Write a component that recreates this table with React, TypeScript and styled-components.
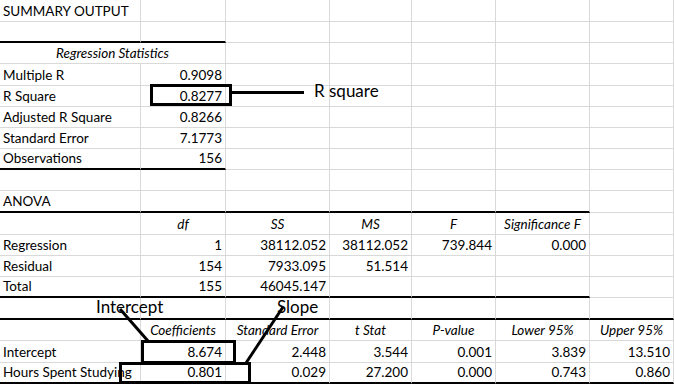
import styled, { createGlobalStyle } from 'styled-components';

const GlobalStyles = createGlobalStyle`
  body {
    margin: 0;
    background: #fff;
    font-family: Lato, "Liberation Sans", sans-serif;
    color: #000;
  }
`;

type Align = 'l' | 'r' | 'c';

type CellDef = {
  text?: string;
  align?: Align;
  italic?: boolean;
  span?: number;
};

type RowDef = {
  cells: CellDef[];
  thick?: number; // how many columns (from A) carry the heavy bottom rule
};

const COLS = 7;
const GRID = '#d9d9d9';

const num = (text: string): CellDef => ({ text, align: 'r' });
const head = (text: string): CellDef => ({ text, align: 'c', italic: true });

const rows: RowDef[] = [
  { cells: [{ text: 'SUMMARY OUTPUT' }] },
  { cells: [], thick: 2 },
  { cells: [{ text: 'Regression Statistics', align: 'c', italic: true, span: 2 }] },
  { cells: [{ text: 'Multiple R' }, num('0.9098')] },
  { cells: [{ text: 'R Square' }, num('0.8277')] },
  { cells: [{ text: 'Adjusted R Square' }, num('0.8266')] },
  { cells: [{ text: 'Standard Error' }, num('7.1773')] },
  { cells: [{ text: 'Observations' }, num('156')], thick: 2 },
  { cells: [] },
  { cells: [{ text: 'ANOVA' }], thick: 6 },
  { cells: [{}, head('df'), head('SS'), head('MS'), head('F'), head('Significance F')] },
  { cells: [{ text: 'Regression' }, num('1'), num('38112.052'), num('38112.052'), num('739.844'), num('0.000')] },
  { cells: [{ text: 'Residual' }, num('154'), num('7933.095'), num('51.514')] },
  { cells: [{ text: 'Total' }, num('155'), num('46045.147')], thick: 6 },
  { cells: [], thick: 7 },
  { cells: [{}, head('Coefficients'), head('Standard Error'), head('t Stat'), head('P-value'), head('Lower 95%'), head('Upper 95%')] },
  { cells: [{ text: 'Intercept' }, num('8.674'), num('2.448'), num('3.544'), num('0.001'), num('3.839'), num('13.510')] },
  { cells: [{ text: 'Hours Spent Studying' }, num('0.801'), num('0.029'), num('27.200'), num('0.000'), num('0.743'), num('0.860')], thick: 7 },
];

const rowHeights = [22, 21, 21, 22, 21, 21, 21, 21, 21, 22, 22, 21, 21, 21, 22, 21, 22, 21];

function App() {
  return (
    <>
      <GlobalStyles />
      <Sheet>
        {rows.map((row, r) => {
          const out: JSX.Element[] = [];
          let col = 0;
          row.cells.forEach((c, i) => {
            const span = c.span ?? 1;
            out.push(
              <Cell
                key={`${r}-${i}`}
                $align={c.align ?? 'l'}
                $italic={!!c.italic}
                $span={span}
                $thick={col < (row.thick ?? 0)}
              >
                {c.text}
              </Cell>
            );
            col += span;
          });
          while (col < COLS) {
            out.push(<Cell key={`${r}-e${col}`} $align="l" $italic={false} $span={1} $thick={col < (row.thick ?? 0)} />);
            col++;
          }
          return out;
        })}

        {/* hand-drawn annotations laid over the sheet */}
        <Callout $x={150} $y={84} $w={82} $h={22} />
        <Callout $x={141} $y={340} $w={95} $h={24} />
        <Callout $x={119} $y={362} $w={132} $h={22} />

        <Leaders width="674" height="385" viewBox="0 0 674 385">
          <line x1="231" y1="92.5" x2="304" y2="92.5" stroke="#000" strokeWidth="3" />
          <line x1="120" y1="309" x2="148" y2="341" stroke="#000" strokeWidth="3" />
          <line x1="283" y1="307" x2="246" y2="363" stroke="#000" strokeWidth="3" />
        </Leaders>

        <Note $x={314} $y={80}>R square</Note>
        <Note $x={96} $y={296}>Intercept</Note>
        <Note $x={277} $y={296}>Slope</Note>
      </Sheet>
    </>
  );
}

const Sheet = styled.div`
  position: relative;
  display: grid;
  grid-template-columns: 141px 85px 104px 82px 84px 94px 84px;
  grid-template-rows: ${rowHeights.map((h) => `${h}px`).join(' ')};
  width: 674px;
  height: 385px;
  overflow: hidden;
  font-size: 13.5px;
`;

const Cell = styled.div<{ $align: Align; $italic: boolean; $span: number; $thick: boolean }>`
  grid-column: span ${(p) => p.$span};
  display: flex;
  align-items: flex-end;
  justify-content: ${(p) => (p.$align === 'r' ? 'flex-end' : p.$align === 'c' ? 'center' : 'flex-start')};
  box-sizing: border-box;
  padding: 0 3px 2px 3px;
  border-right: 1px solid ${GRID};
  border-bottom: ${(p) => (p.$thick ? '2px solid #000' : `1px solid ${GRID}`)};
  font-style: ${(p) => (p.$italic ? 'italic' : 'normal')};
  white-space: nowrap;
  line-height: 16px;
`;

const Callout = styled.div<{ $x: number; $y: number; $w: number; $h: number }>`
  position: absolute;
  left: ${(p) => p.$x}px;
  top: ${(p) => p.$y}px;
  width: ${(p) => p.$w}px;
  height: ${(p) => p.$h}px;
  box-sizing: border-box;
  border: 3px solid #000;
`;

const Leaders = styled.svg`
  position: absolute;
  left: 0;
  top: 0;
  pointer-events: none;
`;

const Note = styled.div<{ $x: number; $y: number }>`
  position: absolute;
  left: ${(p) => p.$x}px;
  top: ${(p) => p.$y}px;
  font-size: 17px;
  line-height: 22px;
`;

export default App
